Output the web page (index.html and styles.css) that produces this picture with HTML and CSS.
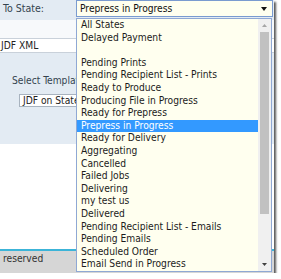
FILE: index.html
```html
<!DOCTYPE html>
<html lang="en">

<head>
  <meta charset="UTF-8" />
  <meta name="viewport" content="width=device-width, initial-scale=1.0" />
  <title>State filter</title>
  <link rel="stylesheet" href="styles.css">
</head>

<body>
  <div class="shot">
    <div class="filter-row">
      <span class="filter-label">To State:</span>
      <div class="state-select">
        <span>Prepress in Progress</span>
        <svg class="caret" width="6" height="4" viewBox="0 0 6 4"><path d="M0 0h6L3 4z" fill="#111" /></svg>
      </div>
    </div>
    <div class="band"></div>
    <div class="xml-field">JDF XML</div>
    <div class="template">
      <div class="template-label">Select Template:</div>
      <div class="template-input">JDF on State Change</div>
    </div>
    <div class="spacer"></div>
    <div class="footer">reserved</div>

    <!-- opened dropdown of the state select, lies over the form -->
    <div class="state-list">
      <ul>
        <li>All States</li>
        <li>Delayed Payment</li>
        <li></li>
        <li>Pending Prints</li>
        <li>Pending Recipient List - Prints</li>
        <li>Ready to Produce</li>
        <li>Producing File in Progress</li>
        <li>Ready for Prepress</li>
        <li class="active">Prepress in Progress</li>
        <li>Ready for Delivery</li>
        <li>Aggregating</li>
        <li>Cancelled</li>
        <li>Failed Jobs</li>
        <li>Delivering</li>
        <li>my test us</li>
        <li>Delivered</li>
        <li>Pending Recipient List - Emails</li>
        <li>Pending Emails</li>
        <li>Scheduled Order</li>
        <li>Email Send in Progress</li>
      </ul>
      <div class="scrollbar">
        <div class="sb-btn"><svg width="5" height="3" viewBox="0 0 5 3"><path d="M0 3h5L2.5 0z" fill="#a6a6a6" /></svg></div>
        <div class="thumb"></div>
        <div class="track"></div>
        <div class="sb-btn"><svg width="5" height="3" viewBox="0 0 5 3"><path d="M0 0h5L2.5 3z" fill="#404040" /></svg></div>
      </div>
    </div>
  </div>
</body>

</html>
```

FILE: styles.css
```css
* {
  margin: 0;
  padding: 0;
  box-sizing: border-box;
}

body {
  background: #fff;
  font-family: "DejaVu Sans Condensed", "DejaVu Sans", sans-serif;
  font-size: 10.2px;
  color: #1c1c1c;
}

.shot {
  position: relative;
  width: 274px;
  height: 273px;
  display: flex;
  flex-direction: column;
  overflow: hidden;
  background: #fff;
  box-shadow: 2px 2px 2px rgba(0, 0, 0, 0.65);
}

.filter-row {
  display: flex;
  height: 20px;
  background: #e3ebf3;
}

.filter-label {
  width: 76px;
  padding: 2px 0 0 3px;
  font-size: 10.5px;
  color: #34434f;
}

.state-select {
  width: 197px;
  height: 17px;
  display: flex;
  align-items: center;
  justify-content: space-between;
  padding: 0 5px 0 3px;
  border: 1px solid #7a9bd0;
  background: #ffffef;
  color: #111;
}

.band {
  height: 18px;
  background: #f7f9fb;
}

.xml-field {
  height: 15px;
  line-height: 13px;
  padding-left: 1px;
  border-top: 1px solid #c9d1da;
  border-bottom: 1px solid #c9d1da;
  background: #fff;
  color: #222;
}

.template {
  height: 91px;
  padding: 22px 0 0 12px;
  background: #e3ebf3;
  color: #34434f;
}

.template-label {
  line-height: 12px;
}

.template-input {
  width: 120px;
  height: 13px;
  margin: 7px 0 0 7px;
  padding-left: 3px;
  line-height: 11px;
  border: 1px solid #a8b3bf;
  background: #fff;
  color: #222;
}

.spacer {
  flex: 1;
}

.footer {
  height: 24px;
  padding: 2px 0 0 3px;
  line-height: 12px;
  border-top: 2px solid #3cb4d8;
  background: #d6d6d6;
  color: #333;
}

.state-list {
  position: absolute;
  left: 76px;
  top: 18px;
  width: 196px;
  height: 254px;
  display: flex;
  border: 1px solid #8fa8d4;
  background: #ffffef;
}

.state-list ul {
  flex: 1;
  list-style: none;
}

.state-list li {
  height: 12.6px;
  line-height: 12.6px;
  padding-left: 4px;
  white-space: nowrap;
}

.state-list li.active {
  background: #3399ff;
  color: #fff;
}

.scrollbar {
  width: 13px;
  display: flex;
  flex-direction: column;
  background: #f0f0f0;
}

.sb-btn {
  height: 13px;
  display: flex;
  align-items: center;
  justify-content: center;
}

.thumb {
  height: 182px;
  margin: 0 2px;
  background: #c1c1c1;
}

.track {
  flex: 1;
}
```
